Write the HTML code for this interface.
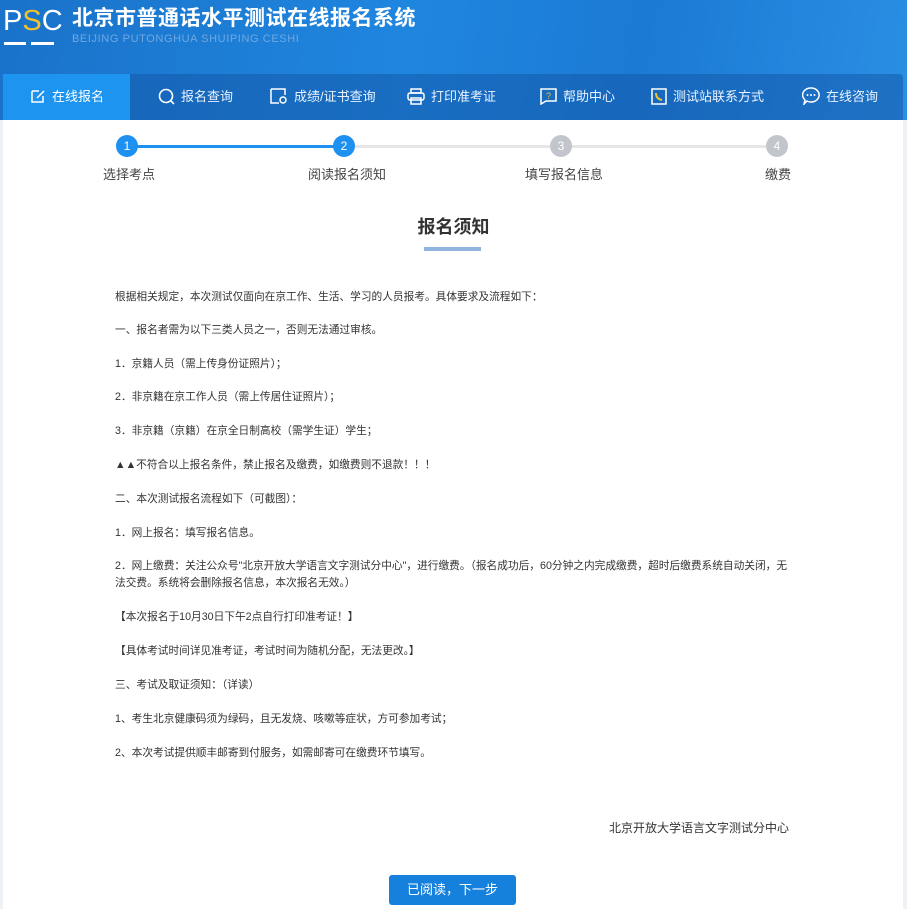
<!DOCTYPE html>
<html><head><meta charset="utf-8">
<style>
*{margin:0;padding:0;box-sizing:border-box}
body{width:907px;height:909px;overflow:hidden;background:#eef2f7;font-family:"Liberation Sans","Noto Sans CJK SC",sans-serif;color:#333;position:relative}
.hdr{position:absolute;left:0;top:0;width:907px;height:120px;background:linear-gradient(100deg,#1a72c9 0%,#1f86df 45%,#1b7ad4 70%,#2a8fe3 100%)}
.logo{position:absolute;left:3px;top:5px;color:#fff;font-size:29px;line-height:32px;font-family:"Liberation Sans",sans-serif}
.logo b{color:#f2c12e;font-weight:normal}
.u1,.u2{position:absolute;top:42px;height:3px;background:#fff}
.title{position:absolute;left:72px;top:5px;color:#fff;font-size:21px;font-weight:bold;letter-spacing:.5px;line-height:28px}
.sub{position:absolute;left:72px;top:33px;color:#6fa8e2;font-size:11px;line-height:12px;letter-spacing:.6px}
.nav{position:absolute;left:3px;top:74px;width:900px;height:46px;background:rgba(20,90,170,.55);border-radius:0 4px 0 0}
.nav div{position:absolute;top:0;height:46px;line-height:46px;color:#eaf3ff;font-size:13px}
.nav .act{left:0;width:127px;background:#1d95f0;padding-left:27px;color:#fff}
.ic{display:inline-block;vertical-align:middle;margin-right:6px;margin-top:-3px}
.main{position:absolute;left:3px;top:120px;width:900px;height:789px;background:#fff}
.step{position:absolute;top:135px;width:22px;height:22px;border-radius:50%;color:#fff;font-size:12px;text-align:center;line-height:22px}
.sl{position:absolute;top:164px;font-size:13px;color:#444}
p.t{position:absolute;left:115px;font-size:10.7px;color:#333;white-space:nowrap}
</style></head><body>
<div class="hdr">
 <div class="logo">P<b>S</b>C</div>
 <div class="u1" style="left:4px;width:22px"></div><div class="u2" style="left:31px;width:23px"></div>
 <div class="title">北京市普通话水平测试在线报名系统</div>
 <div class="sub">BEIJING PUTONGHUA SHUIPING CESHI</div>
</div>
<div class="nav">
 <div class="act"><svg class="ic" width="16" height="16" viewBox="0 0 16 16"><path d="M2 3h7M2 3v11h11V8" fill="none" stroke="#fff" stroke-width="1.5"/><path d="M7 10l7-7" stroke="#fff" stroke-width="1.5"/></svg>在线报名</div>
 <div style="left:155px"><svg class="ic" width="17" height="17" viewBox="0 0 17 17"><circle cx="8" cy="8" r="6.5" fill="none" stroke="#fff" stroke-width="1.6"/><path d="M13 13l3 3" stroke="#fff" stroke-width="1.6"/></svg>报名查询</div>
 <div style="left:267px"><svg class="ic" width="18" height="17" viewBox="0 0 18 17"><path d="M1 1h14v6M1 1v14h8" fill="none" stroke="#fff" stroke-width="1.5"/><circle cx="13" cy="12" r="3" fill="none" stroke="#fff" stroke-width="1.5"/></svg>成绩/证书查询</div>
 <div style="left:404px"><svg class="ic" width="18" height="17" viewBox="0 0 18 17"><rect x="1" y="5" width="16" height="7" rx="2" fill="none" stroke="#fff" stroke-width="1.5"/><rect x="4" y="1" width="10" height="4" fill="none" stroke="#fff" stroke-width="1.5"/><rect x="4" y="10" width="10" height="6" fill="none" stroke="#fff" stroke-width="1.5"/></svg>打印准考证</div>
 <div style="left:537px"><svg class="ic" width="17" height="17" viewBox="0 0 17 17"><path d="M1 1h15v12H6l-5 3z" fill="none" stroke="#fff" stroke-width="1.5"/><text x="6" y="11" font-size="9" fill="#f2c12e">?</text></svg>帮助中心</div>
 <div style="left:647px"><svg class="ic" width="17" height="17" viewBox="0 0 17 17"><rect x="2" y="1" width="14" height="15" fill="none" stroke="#fff" stroke-width="1.5"/><path d="M6 5q0 6 6 7" fill="none" stroke="#f2c12e" stroke-width="2"/></svg>测试站联系方式</div>
 <div style="left:799px"><svg class="ic" width="18" height="18" viewBox="0 0 18 18"><path d="M9 1a8 7 0 1 1-4 13l-3 3 1-4A8 7 0 0 1 9 1z" fill="none" stroke="#fff" stroke-width="1.5"/><circle cx="5.5" cy="8" r="1" fill="#fff"/><circle cx="9" cy="8" r="1" fill="#fff"/><circle cx="12.5" cy="8" r="1" fill="#fff"/></svg>在线咨询</div>
</div>
<div class="main"></div>
<div style="position:absolute;left:128px;top:145px;width:215px;height:3px;background:#1e90f0"></div>
<div style="position:absolute;left:355px;top:145px;width:420px;height:3px;background:#e6e6e6"></div>
<div class="step" style="left:116px;background:#1e90f0">1</div>
<div class="step" style="left:333px;background:#1e90f0">2</div>
<div class="step" style="left:550px;background:#c2c6cc">3</div>
<div class="step" style="left:766px;background:#c2c6cc">4</div>
<div class="sl" style="left:103px">选择考点</div>
<div class="sl" style="left:308px">阅读报名须知</div>
<div class="sl" style="left:525px">填写报名信息</div>
<div class="sl" style="left:765px">缴费</div>
<div style="position:absolute;left:0;width:907px;top:213px;text-align:center;font-size:18px;font-weight:bold;color:#333">报名须知</div>
<div style="position:absolute;left:424px;top:247px;width:57px;height:4px;background:#8fb4e0"></div>
<p class="t" style="top:289px">根据相关规定，本次测试仅面向在京工作、生活、学习的人员报考。具体要求及流程如下：</p>
<p class="t" style="top:322px">一、报名者需为以下三类人员之一，否则无法通过审核。</p>
<p class="t" style="top:356px">1．京籍人员（需上传身份证照片）；</p>
<p class="t" style="top:389px">2．非京籍在京工作人员（需上传居住证照片）；</p>
<p class="t" style="top:423px">3．非京籍（京籍）在京全日制高校（需学生证）学生；</p>
<p class="t" style="top:457px">▲▲不符合以上报名条件，禁止报名及缴费，如缴费则不退款！！！</p>
<p class="t" style="top:491px">二、本次测试报名流程如下（可截图）：</p>
<p class="t" style="top:525px">1．网上报名：填写报名信息。</p>
<p class="t" style="top:558px">2．网上缴费：关注公众号"北京开放大学语言文字测试分中心"，进行缴费。（报名成功后，60分钟之内完成缴费，超时后缴费系统自动关闭，无</p>
<p class="t" style="top:575px">法交费。系统将会删除报名信息，本次报名无效。）</p>
<p class="t" style="top:609px">【本次报名于10月30日下午2点自行打印准考证！】</p>
<p class="t" style="top:643px">【具体考试时间详见准考证，考试时间为随机分配，无法更改。】</p>
<p class="t" style="top:677px">三、考试及取证须知：（详读）</p>
<p class="t" style="top:711px">1、考生北京健康码须为绿码，且无发烧、咳嗽等症状，方可参加考试；</p>
<p class="t" style="top:745px">2、本次考试提供顺丰邮寄到付服务，如需邮寄可在缴费环节填写。</p>
<p class="t" style="top:819px;left:609px;font-size:12px">北京开放大学语言文字测试分中心</p>
<div style="position:absolute;left:389px;top:875px;width:127px;height:30px;background:#1681dc;border-radius:3px;color:#fff;font-size:13px;text-align:center;line-height:30px">已阅读，下一步</div>
</body></html>
